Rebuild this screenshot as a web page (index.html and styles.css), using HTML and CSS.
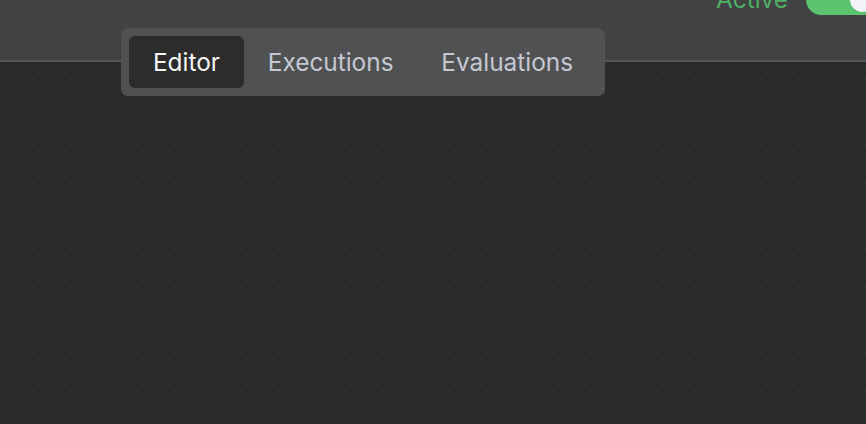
FILE: index.html
```html
<!DOCTYPE html>
<html>
<head>
<meta charset="utf-8">
<link rel="stylesheet" href="styles.css">
</head>
<body>
<div class="app">
  <header class="header">
    <div class="status">
      <span class="status-label">Active</span>
      <span class="toggle"><span class="knob"></span></span>
    </div>
  </header>
  <main class="canvas"></main>
  <nav class="tabs">
    <span class="tab tab-active">Editor</span>
    <span class="tab">Executions</span>
    <span class="tab">Evaluations</span>
  </nav>
</div>
</body>
</html>
```
FILE: styles.css
```css
html, body {
  margin: 0;
  padding: 0;
  width: 866px;
  height: 424px;
  overflow: hidden;
  background: #2b2b2b;
  font-family: Inter, "Noto Sans", sans-serif;
}
.app {
  position: relative;
  display: flex;
  flex-direction: column;
  height: 424px;
}
.header {
  height: 60px;
  background: #414244;
  border-bottom: 2px solid #545557;
  display: flex;
  justify-content: flex-end;
  align-items: flex-start;
}
.status {
  display: flex;
  align-items: flex-start;
  gap: 18px;
  margin-top: -16px;
  margin-right: -40px;
}
.status-label {
  color: #4fae63;
  font-size: 24.4px;
  line-height: 26px;
  margin-top: 2px;
}
.toggle {
  width: 100px;
  height: 31px;
  border-radius: 16px;
  background: #5cc46f;
  position: relative;
}
.knob {
  position: absolute;
  left: 44px;
  top: 3px;
  width: 25px;
  height: 25px;
  border-radius: 50%;
  background: #f2f2f7;
}
.canvas {
  flex: 1;
  background-color: #2b2b2b;
  background-image: radial-gradient(circle, #4a4a4a 0.7px, transparent 0.9px);
  background-size: 13px 13px;
  background-position: 0px -2px;
}
.tabs {
  position: absolute;
  left: 121px;
  top: 28px;
  display: flex;
  padding: 8px;
  background: #505153;
  border-radius: 7px;
}
.tab {
  height: 52px;
  padding: 0 23.9px;
  display: flex;
  align-items: center;
  font-size: 24.4px;
  color: #c5c8d2;
  border-radius: 6px;
}
.tab-active {
  background: #2c2c2c;
  color: #f5f5f5;
}
```
